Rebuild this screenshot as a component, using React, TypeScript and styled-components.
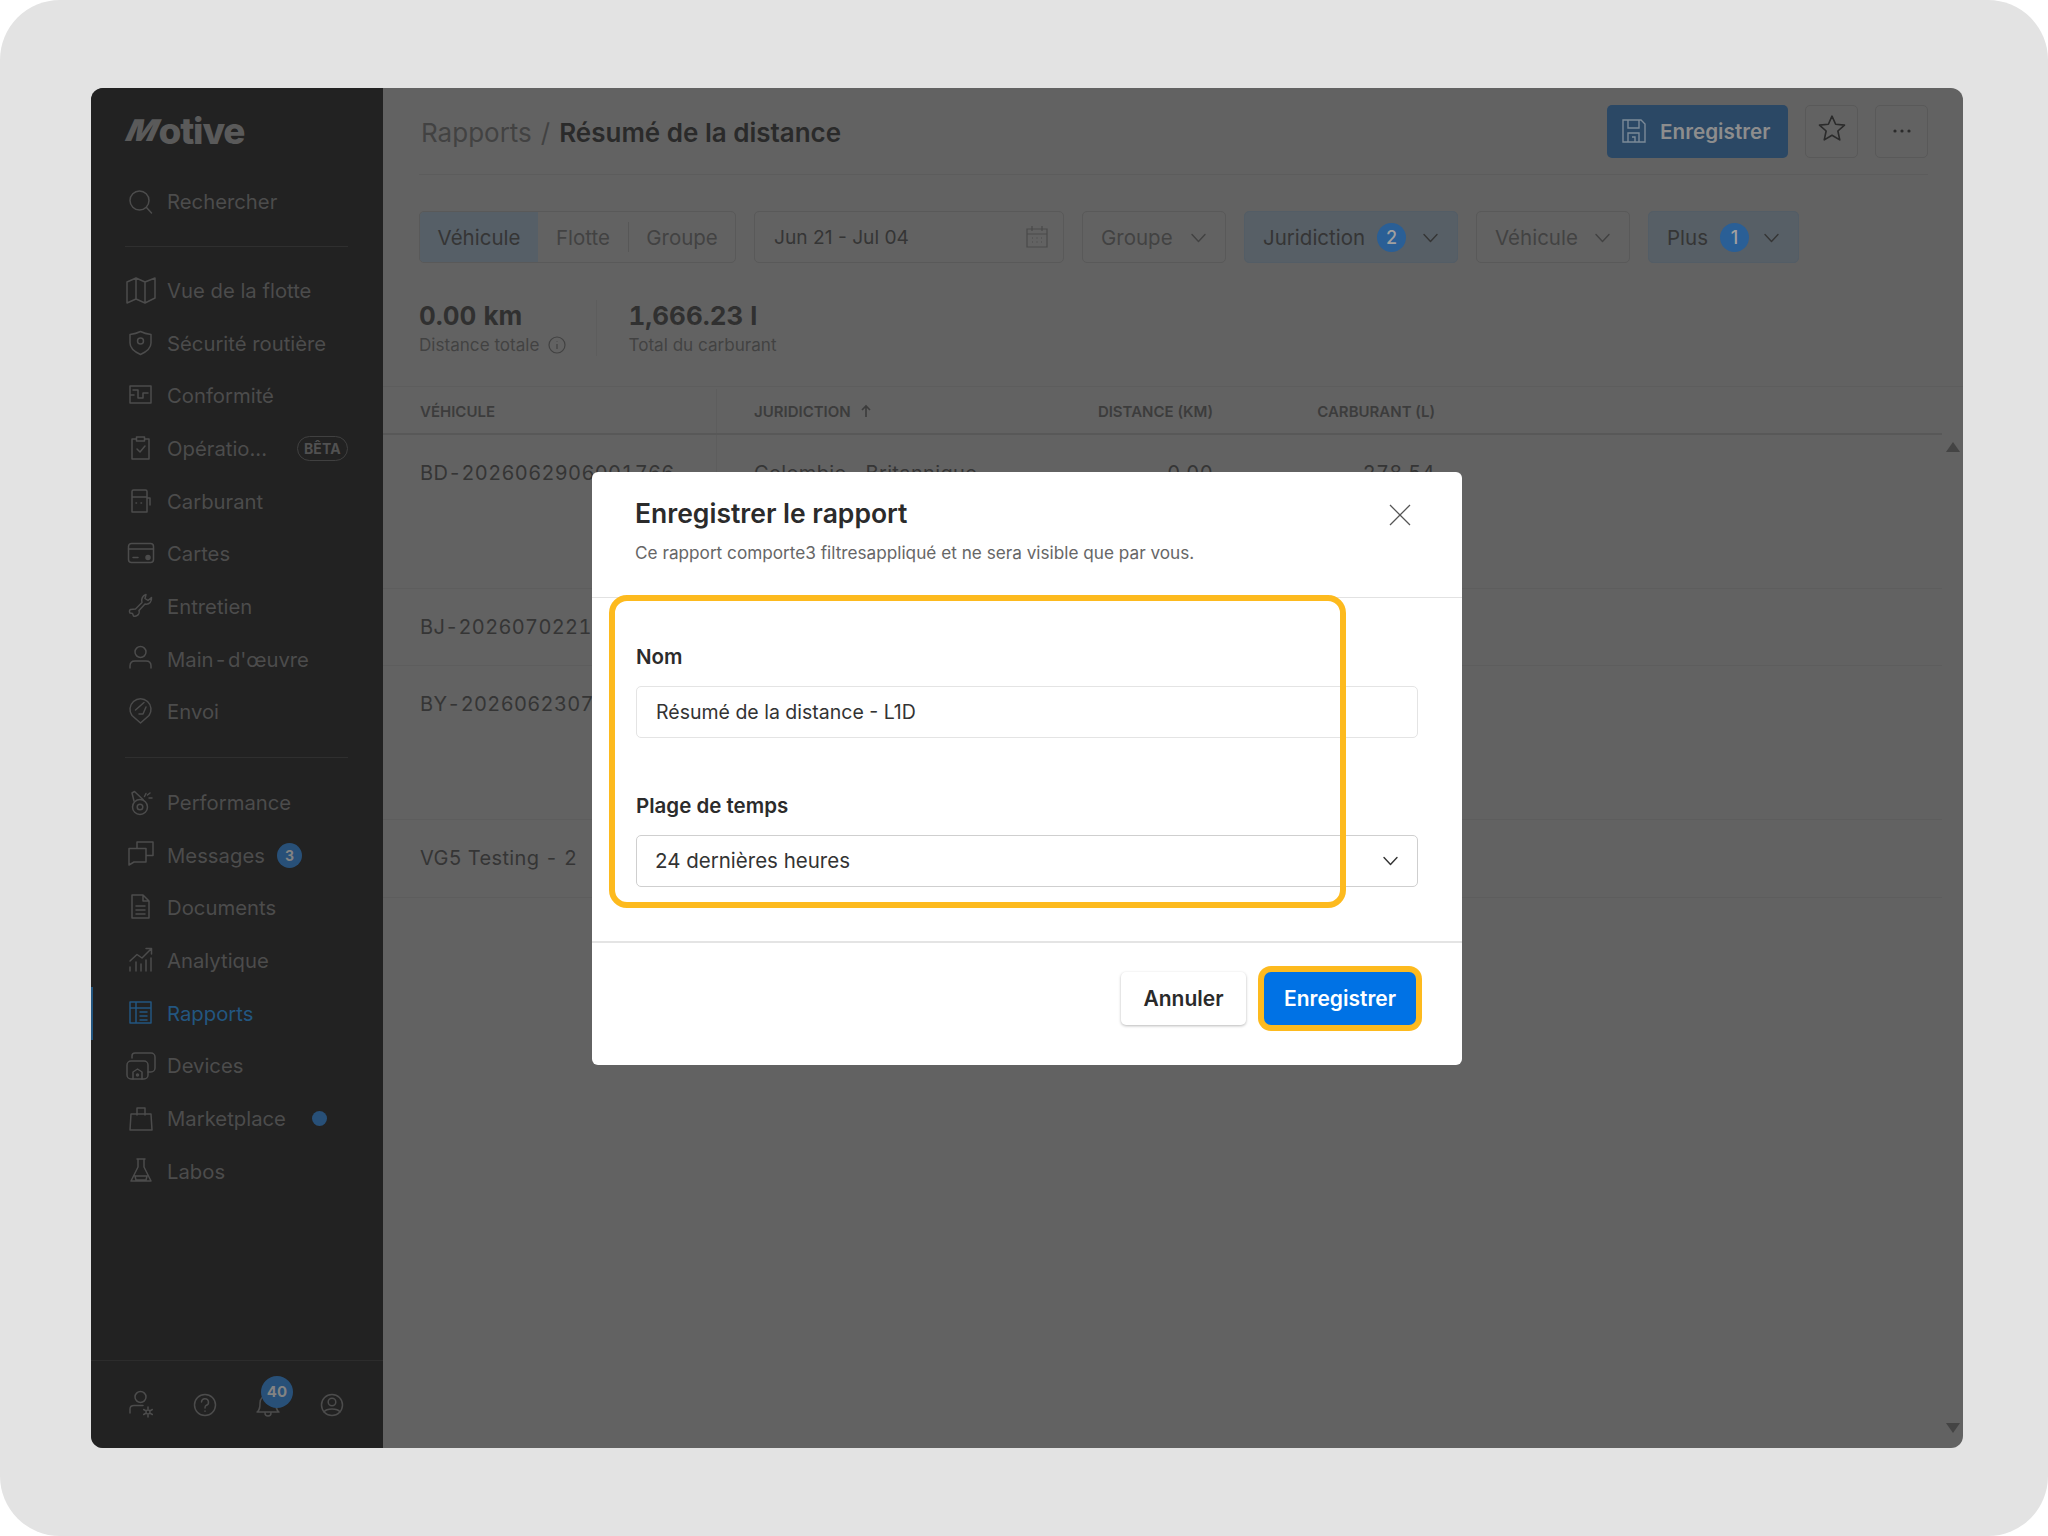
import React from "react";
import styled, { createGlobalStyle } from "styled-components";

const GlobalStyle = createGlobalStyle`
  html, body {
    margin: 0;
    padding: 0;
    background: #ffffff;
    font-family: "Inter", "Liberation Sans", sans-serif;
  }
  * {
    box-sizing: border-box;
  }
`;

const navText = "#4c4c4c";
const dimBorder = "#595959";
const dimText = "#353535";
const dimMuted = "#424242";
const blue = "#2a5f96";
const navyBlue = "#285078";
const yellow = "#fdba1e";

const Page = styled.div`
  width: 2048px;
  height: 1536px;
  padding: 88px 85px 88px 91px;
  background: #e3e3e3;
  border-radius: 60px;
`;

const Window = styled.div`
  position: relative;
  display: flex;
  height: 100%;
  background: #626262;
  border-radius: 12px;
  overflow: hidden;
`;

// Sidebar
const Sidebar = styled.aside`
  display: flex;
  flex-direction: column;
  width: 292px;
  flex: none;
  background: #222222;
  color: ${navText};
`;

const LogoRow = styled.div`
  display: flex;
  align-items: center;
  height: 84px;
  padding-left: 38px;
  font-size: 37px;
  font-weight: 800;
  letter-spacing: -1.2px;
  color: #5a5a5a;
`;

const LogoM = styled.span`
  display: inline-block;
  font-size: 30px;
  font-weight: 900;
  transform: skewX(-24deg) scaleX(1.06);
  margin-right: 2px;
`;

const SideDivider = styled.div<{ $top: number; $bottom: number }>`
  height: 1px;
  margin: ${(p) => p.$top}px 35px ${(p) => p.$bottom}px 34px;
  background: #2f2f2f;
`;

const NavRow = styled.div<{ $active?: boolean; $height?: number }>`
  position: relative;
  display: flex;
  align-items: center;
  height: ${(p) => p.$height ?? 52.7}px;
  padding: 0 35px;
  font-size: 20.3px;
  white-space: nowrap;
  color: ${(p) => (p.$active ? "#235680" : navText)};

  ${(p) =>
    p.$active &&
    `&::before {
      content: "";
      position: absolute;
      left: 0;
      top: 0;
      bottom: 0;
      width: 2px;
      background: #235680;
    }`}
`;

const NavHyphen = styled.span`
  margin: 0 2.5px;
`;

const NavIcon = styled.svg`
  width: 30px;
  height: 30px;
  flex: none;
  margin-right: 11px;
  fill: none;
  stroke: currentColor;
  stroke-width: 1.5;
  stroke-linejoin: round;
  stroke-linecap: round;
`;

const BetaPill = styled.span`
  margin-left: auto;
  padding: 0 6px;
  height: 25px;
  line-height: 23px;
  border: 1px solid #404040;
  border-radius: 13px;
  font-size: 14px;
  font-weight: 700;
  letter-spacing: 0.2px;
  color: #515151;
`;

const CountBadge = styled.span`
  display: flex;
  align-items: center;
  justify-content: center;
  width: 25px;
  height: 25px;
  margin-left: 12px;
  border-radius: 50%;
  background: ${navyBlue};
  color: #838383;
  font-size: 14px;
  font-weight: 700;
`;

const NewDot = styled.span`
  width: 15px;
  height: 15px;
  margin-left: 26px;
  border-radius: 50%;
  background: ${navyBlue};
`;

const SideSpacer = styled.div`
  flex: 1;
`;

const SideFooter = styled.div`
  display: flex;
  align-items: center;
  gap: 33.5px;
  height: 88px;
  padding-left: 35px;
  border-top: 1px solid #2c2c2c;
`;

const FooterIcon = styled.div`
  position: relative;
  display: flex;
  width: 30px;
  height: 30px;
  color: ${navText};
`;

const BellBadge = styled.span`
  position: absolute;
  left: 8px;
  top: -14px;
  display: flex;
  align-items: center;
  justify-content: center;
  width: 32px;
  height: 32px;
  border-radius: 50%;
  background: ${navyBlue};
  color: #838383;
  font-size: 15px;
  font-weight: 700;
`;

// Main column
const Main = styled.main`
  display: flex;
  flex-direction: column;
  flex: 1;
  min-width: 0;
`;

const Header = styled.header`
  display: flex;
  align-items: center;
  justify-content: space-between;
  height: 87px;
  margin: 0 35px 0 36px;
  padding: 0 0 0 2px;
  border-bottom: 1px solid #5c5c5c;
`;

const Crumbs = styled.div`
  display: flex;
  align-items: baseline;
  padding-top: 3px;
  font-size: 26px;
  color: ${dimMuted};
`;

const CrumbSep = styled.span`
  margin: 0 9px;
`;

const CrumbCurrent = styled.span`
  font-weight: 600;
  color: #2a2a2a;
`;

const HeaderActions = styled.div`
  display: flex;
  gap: 17px;
`;

const SaveButton = styled.div`
  display: flex;
  align-items: center;
  gap: 14px;
  width: 181px;
  height: 53px;
  padding-left: 15px;
  border-radius: 5px;
  background: #2b4865;
  color: #8d8d8d;
  font-size: 20.7px;
  font-weight: 600;
`;

const SquareButton = styled.div<{ $raised?: boolean }>`
  display: flex;
  align-items: center;
  justify-content: center;
  width: 53px;
  height: 53px;
  padding-bottom: ${(p) => (p.$raised ? 7 : 0)}px;
  border: 1px solid ${dimBorder};
  border-radius: 5px;
  color: #2b2b2b;
`;

const FilterBar = styled.div`
  display: flex;
  gap: 18px;
  height: 52px;
  margin: 36px 0 0 36px;
  font-size: 20.5px;
  color: ${dimText};
`;

const Segments = styled.div`
  display: flex;
  align-items: center;
  width: 317px;
  border: 1px solid ${dimBorder};
  border-radius: 5px;
  overflow: hidden;
`;

const Segment = styled.div<{ $active?: boolean; $width: number }>`
  display: flex;
  align-items: center;
  justify-content: center;
  align-self: stretch;
  width: ${(p) => p.$width}px;
  background: ${(p) => (p.$active ? "#565f67" : "transparent")};
  color: ${(p) => (p.$active ? dimText : dimMuted)};
`;

const SegmentRule = styled.div`
  width: 1px;
  height: 30px;
  background: #575757;
`;

const DateField = styled.div`
  display: flex;
  align-items: center;
  justify-content: space-between;
  width: 310px;
  padding: 0 15px 0 19px;
  border: 1px solid ${dimBorder};
  border-radius: 5px;
  font-size: 19.2px;
`;

const Filter = styled.div<{ $selected?: boolean; $width: number; $muted?: boolean }>`
  display: flex;
  align-items: center;
  width: ${(p) => p.$width}px;
  padding: 0 18px;
  border: 1px solid ${(p) => (p.$selected ? "#535d66" : dimBorder)};
  border-radius: 5px;
  background: ${(p) => (p.$selected ? "#575f66" : "transparent")};
  color: ${(p) => (p.$muted ? dimMuted : dimText)};
`;

const FilterCount = styled.span`
  display: flex;
  align-items: center;
  justify-content: center;
  width: 29px;
  height: 29px;
  margin-left: 12px;
  border-radius: 50%;
  background: ${blue};
  color: #a0a0a0;
  font-size: 18px;
  font-weight: 500;
`;

const Chevron = styled.svg`
  width: 17px;
  height: 17px;
  margin-left: auto;
  fill: none;
  stroke: currentColor;
  stroke-width: 1.4;
  stroke-linecap: round;
  stroke-linejoin: round;
`;

const Stats = styled.div`
  display: flex;
  height: 56px;
  margin: 37px 0 30px 36px;
`;

const Stat = styled.div<{ $rule?: boolean }>`
  display: flex;
  flex-direction: column;
  gap: 2px;
  padding-right: 30px;
  margin-right: 31px;
  border-right: 1px solid ${(p) => (p.$rule ? "#5d5d5d" : "transparent")};
`;

const StatValue = styled.div`
  font-size: 26px;
  line-height: 32px;
  font-weight: 700;
  font-variant-numeric: tabular-nums;
  color: #303030;
`;

const StatLabel = styled.div`
  display: flex;
  align-items: center;
  gap: 9px;
  font-size: 17.1px;
  line-height: 22px;
  color: ${dimMuted};
`;

const Table = styled.div`
  display: flex;
  flex-direction: column;
  flex: 1;
  min-height: 0;
  border-top: 1px solid #5d5d5d;
`;

const tableColumns = "334px 320px 193px 222px 1fr";

const HeadRow = styled.div`
  display: grid;
  grid-template-columns: ${tableColumns};
  height: 48px;
  margin-right: 21px;
  padding-top: 2px;
  border-bottom: 2px solid #585858;
  font-size: 15px;
  font-weight: 600;
  color: #3c3c3c;
`;

const HeadCell = styled.div<{ $right?: boolean; $rule?: boolean }>`
  display: flex;
  align-items: center;
  gap: 9px;
  justify-content: ${(p) => (p.$right ? "flex-end" : "flex-start")};
  padding: 0 16px 0 ${(p) => (p.$right ? 0 : 37)}px;
  border-right: 1px solid ${(p) => (p.$rule ? "#5d5d5d" : "transparent")};
`;

const BodyWrap = styled.div`
  display: flex;
  flex: 1;
  min-height: 0;
`;

const Rows = styled.div`
  flex: 1;
`;

const Row = styled.div<{ $height: number }>`
  display: grid;
  grid-template-columns: ${tableColumns};
  height: ${(p) => p.$height}px;
  border-bottom: 1px solid #5d5d5d;
  font-size: 20px;
  line-height: 26px;
  letter-spacing: 0.35px;
  font-variant-numeric: tabular-nums;
  color: ${dimText};
`;

const Cell = styled.div<{ $right?: boolean; $rule?: boolean }>`
  padding: 25px 16px 0 ${(p) => (p.$right ? 0 : 37)}px;
  text-align: ${(p) => (p.$right ? "right" : "left")};
  white-space: nowrap;
  overflow: hidden;
  border-right: 1px solid ${(p) => (p.$rule ? "#5d5d5d" : "transparent")};
`;

const Scrollbar = styled.div`
  display: flex;
  flex-direction: column;
  justify-content: space-between;
  align-items: center;
  width: 21px;
  padding: 7px 0 15px;
`;

const ScrollArrow = styled.div<{ $down?: boolean }>`
  width: 0;
  height: 0;
  border-left: 7px solid transparent;
  border-right: 7px solid transparent;
  ${(p) => (p.$down ? "border-top: 10px solid #444444;" : "border-bottom: 10px solid #444444;")}
`;

// Dialog
const ModalLayer = styled.div`
  position: absolute;
  inset: 0;
  display: flex;
  align-items: center;
  justify-content: center;
`;

const Modal = styled.div`
  position: relative;
  width: 870px;
  height: 593px;
  background: #ffffff;
  border-radius: 6px;
  color: #2b2b2b;
`;

const ModalHeader = styled.div`
  position: relative;
  height: 126px;
  padding: 25px 44px 0;
  border-bottom: 1px solid #e2e2e2;
`;

const ModalTitle = styled.div`
  margin-left: -1px;
  font-size: 26.5px;
  line-height: 32px;
  font-weight: 600;
`;

const ModalSub = styled.div`
  margin: 12px 0 0 -1px;
  font-size: 17.2px;
  line-height: 24px;
  color: #666666;
`;

const CloseIcon = styled.svg`
  position: absolute;
  right: 50px;
  top: 31px;
  width: 24px;
  height: 24px;
  fill: none;
  stroke: #555555;
  stroke-width: 1.3;
`;

const ModalBody = styled.div`
  height: 345px;
  padding: 47px 44px 0;
  border-bottom: 2px solid #e4e4e4;
`;

const FieldLabel = styled.div`
  font-size: 20.5px;
  line-height: 24px;
  font-weight: 600;
  margin-bottom: 17px;
`;

const FieldBox = styled.div<{ $select?: boolean }>`
  display: flex;
  align-items: center;
  justify-content: space-between;
  height: 52px;
  padding: 0 18px 0 ${(p) => (p.$select ? 18 : 19)}px;
  margin-bottom: ${(p) => (p.$select ? 0 : 56)}px;
  border: 1.5px solid ${(p) => (p.$select ? "#cfcfcf" : "#e4e4e4")};
  border-radius: 5px;
  font-size: ${(p) => (p.$select ? 20.5 : 19.5)}px;
  color: #333333;
`;

const ModalFooter = styled.div`
  display: flex;
  justify-content: flex-end;
  gap: 18px;
  padding: 29px 46px 0 0;
`;

const CancelButton = styled.div`
  display: flex;
  align-items: center;
  justify-content: center;
  width: 125px;
  height: 53px;
  border-radius: 5px;
  background: #ffffff;
  box-shadow: 0 1px 3px rgba(0, 0, 0, 0.28);
  font-size: 21px;
  font-weight: 600;
  color: #2a2a2a;
`;

const PrimaryButton = styled.div`
  display: flex;
  align-items: center;
  justify-content: center;
  width: 152px;
  height: 53px;
  border-radius: 7px;
  background: #0072e5;
  box-shadow: 0 0 0 6px ${yellow};
  font-size: 21px;
  font-weight: 600;
  color: #ffffff;
`;

const FieldHighlight = styled.div`
  position: absolute;
  left: 17px;
  top: 123px;
  width: 737px;
  height: 313px;
  border: 6px solid ${yellow};
  border-radius: 18px;
  pointer-events: none;
`;

const icons: Record<string, React.ReactNode> = {
  search: (
    <>
      <circle cx="13.5" cy="13.5" r="9.5" />
      <path d="M20.5 20.5L25.5 26" />
    </>
  ),
  map: <path d="M1 7L10 3L19 7L29 3V23L19 28L10 24L1 28ZM10 3V24M19 7V28" />,
  shield: (
    <>
      <path d="M4 6.5C8 6 11.5 5 14.5 3.5C17.5 5 21 6 25 6.5V15C25 20 20 24 14.5 26.5C9 24 4 20 4 15Z" />
      <circle cx="14.5" cy="13" r="3" />
    </>
  ),
  compliance: <path d="M4 5H25V22H4ZM7 9H12V17H17V12H22M4 14H8" />,
  clipboard: <path d="M10 6H6V26H23V6H19M10.5 4H18.5V8H10.5ZM11 16L14 19L19 13" />,
  fuel: <path d="M6 26V5.5A1.5 1.5 0 0 1 7.5 4H19.5A1.5 1.5 0 0 1 21 5.5V26ZM6 11H21M21 12H24V19M10 17H10.5M15 17H15.5" />,
  card: (
    <>
      <rect x="2.5" y="4.5" width="25" height="19" rx="3" />
      <path d="M2.5 10H27.5M7 18.5H12" />
      <circle cx="22" cy="18.5" r="2" fill="currentColor" />
    </>
  ),
  wrench: <path d="M4.5 18.5L9.5 18L16 11.5C15 8 16.5 4.5 20 3.5L19 7.5L22 9.5L25.5 6.5C26 10 23.5 14 19 13L13 19.5C13.5 21 13 23.5 11 24.5C9.5 25 8.5 26 7.5 25L6.5 22.5L4 22C3 20.5 3.5 19 4.5 18.5Z" />,
  user: (
    <>
      <circle cx="14.5" cy="8" r="5.5" />
      <path d="M4 24V22C4 19 6 17 9 17H20C23 17 25 19 25 22V24" />
    </>
  ),
  dispatch: <path d="M14.5 26L6 18.5A10.5 10.5 0 1 1 23 18.5ZM9.5 13L18 5.5M13 17H17L20 10" />,
  performance: (
    <>
      <circle cx="14" cy="19" r="7.5" />
      <circle cx="14" cy="19" r="2.8" />
      <path d="M8 13L6 5L8.5 3.5L17 11.5M20 5.5L18.5 8.5M26 10H23M24 5L21.5 7" />
    </>
  ),
  messages: <path d="M11 8V2H27V15.5H20M3 8.5H20V22H8L3 25Z" />,
  documents: <path d="M6 2H17L23 8V25H6ZM17 2V8H23M10 13H19M10 17H19M10 21H19" />,
  analytics: <path d="M4 15L11 8.5L16 12L25 3M20 2.5H25.5V8M4 25V21M10 25V16M15 25V18M20 25V14M25 25V12" />,
  reports: <path d="M4 4H25V25H4ZM4 10H25M10 4V25M14 14H21M14 18H21M14 22H21" />,
  devices: (
    <>
      <path d="M6 7V5A3 3 0 0 1 9 2H25A4 4 0 0 1 29 6V17A4 4 0 0 1 25 21H22" />
      <rect x="1" y="10" width="21" height="18" rx="4" />
      <path d="M7 28V21L11.5 18L16 21V28" />
      <circle cx="11.5" cy="24" r="1" fill="currentColor" />
    </>
  ),
  bag: <path d="M5 10H25L26 26H4ZM11 11V4H19V11" />,
  flask: <path d="M11 3H19M12 3V11L5 25H25L18 11V3M9 20H21L20 24H10Z" />,
  userCog: (
    <>
      <circle cx="14.5" cy="7" r="5.5" />
      <path d="M4 23V19C4 17 5.5 15.5 8 15.5H17" />
      <circle cx="22" cy="22" r="2" />
      <path d="M22 17V19M22 25V27M17.7 19.5L19.4 20.5M24.6 23.5L26.3 24.5M17.7 24.5L19.4 23.5M24.6 20.5L26.3 19.5" />
    </>
  ),
  help: (
    <>
      <circle cx="15" cy="15" r="10.5" />
      <path d="M11.5 12A3.5 3.5 0 1 1 16 15.5C15 16 15 17 15 18M15 21V21.2" />
    </>
  ),
  bell: <path d="M4 22C7 20 7 17 7 13A8 8 0 0 1 23 13C23 17 23 20 26 22ZM12 23A3 3 0 0 0 18 23" />,
  account: (
    <>
      <circle cx="15" cy="15" r="10.5" />
      <circle cx="15" cy="12" r="3.8" />
      <path d="M7 22C9 19 12 19 15 19C18 19 21 19 23 22" />
    </>
  ),
};

const Icon = ({ name }: { name: string }) => <NavIcon viewBox="0 0 30 30">{icons[name]}</NavIcon>;

const ChevronDown = () => (
  <Chevron viewBox="0 0 17 17">
    <path d="M2 5.5L8.5 12.5L15 5.5" />
  </Chevron>
);

const topNav = [
  { icon: "map", label: "Vue de la flotte" },
  { icon: "shield", label: "Sécurité routière" },
  { icon: "compliance", label: "Conformité" },
  { icon: "clipboard", label: "Opératio...", beta: true },
  { icon: "fuel", label: "Carburant" },
  { icon: "card", label: "Cartes" },
  { icon: "wrench", label: "Entretien" },
  {
    icon: "user",
    label: (
      <>
        Main<NavHyphen>-</NavHyphen>d'œuvre
      </>
    ),
  },
  { icon: "dispatch", label: "Envoi" },
];

const bottomNav = [
  { icon: "performance", label: "Performance" },
  { icon: "messages", label: "Messages", count: 3 },
  { icon: "documents", label: "Documents" },
  { icon: "analytics", label: "Analytique" },
  { icon: "reports", label: "Rapports", active: true },
  { icon: "devices", label: "Devices" },
  { icon: "bag", label: "Marketplace", dot: true },
  { icon: "flask", label: "Labos" },
];

const rows = [
  { id: "BD-20260629060​01766", place: "Colombie- Britannique", km: "0.00", fuel: "278.54", height: 154 },
  { id: "BJ-2026070221​001544", place: "Colombie- Britannique", km: "0.00", fuel: "412.10", height: 77 },
  { id: "BY-2026062307​001289", place: "Colombie- Britannique", km: "0.00", fuel: "611.37", height: 154 },
  { id: "VG5 Testing - 2", place: "Colombie- Britannique", km: "0.00", fuel: "364.22", height: 78 },
];

const App: React.FC = () => {
  return (
    <Page>
      <GlobalStyle />
      <Window>
        <Sidebar>
          <LogoRow>
            <LogoM>M</LogoM>otive
          </LogoRow>
          <NavRow $height={59}>
            <Icon name="search" />
            Rechercher
          </NavRow>
          <SideDivider $top={15} $bottom={17} />
          {topNav.map((item) => (
            <NavRow key={item.icon}>
              <Icon name={item.icon} />
              {item.label}
              {item.beta && <BetaPill>BÊTA</BetaPill>}
            </NavRow>
          ))}
          <SideDivider $top={19} $bottom={18} />
          {bottomNav.map((item) => (
            <NavRow key={item.label} $active={item.active}>
              <Icon name={item.icon} />
              {item.label}
              {item.count && <CountBadge>{item.count}</CountBadge>}
              {item.dot && <NewDot />}
            </NavRow>
          ))}
          <SideSpacer />
          <SideFooter>
            <FooterIcon>
              <Icon name="userCog" />
            </FooterIcon>
            <FooterIcon>
              <Icon name="help" />
            </FooterIcon>
            <FooterIcon>
              <Icon name="bell" />
              <BellBadge>40</BellBadge>
            </FooterIcon>
            <FooterIcon>
              <Icon name="account" />
            </FooterIcon>
          </SideFooter>
        </Sidebar>

        <Main>
          <Header>
            <Crumbs>
              Rapports
              <CrumbSep>/</CrumbSep>
              <CrumbCurrent>Résumé de la distance</CrumbCurrent>
            </Crumbs>
            <HeaderActions>
              <SaveButton>
                <svg width="24" height="26" viewBox="0 0 24 26" fill="none" stroke="#7c8a98" strokeWidth="1.4">
                  <path d="M1 2H19L23 6V24H1ZM6 2V10H17V2M6 24V15H17V24M10 19H13V24" />
                </svg>
                Enregistrer
              </SaveButton>
              <SquareButton $raised>
                <svg width="30" height="30" viewBox="0 0 24 24" fill="none" stroke="currentColor" strokeWidth="1.3" strokeLinejoin="round">
                  <path d="M12 2.5L14.9 9L22 9.7L16.7 14.4L18.2 21.5L12 17.8L5.8 21.5L7.3 14.4L2 9.7L9.1 9Z" />
                </svg>
              </SquareButton>
              <SquareButton>
                <svg width="20" height="6" viewBox="0 0 20 6" fill="currentColor">
                  <circle cx="3" cy="3" r="1.6" />
                  <circle cx="10" cy="3" r="1.6" />
                  <circle cx="17" cy="3" r="1.6" />
                </svg>
              </SquareButton>
            </HeaderActions>
          </Header>

          <FilterBar>
            <Segments>
              <Segment $active $width={118}>Véhicule</Segment>
              <Segment $width={90}>Flotte</Segment>
              <SegmentRule />
              <Segment $width={106}>Groupe</Segment>
            </Segments>
            <DateField>
              Jun 21 - Jul 04
              <svg width="22" height="24" viewBox="0 0 22 24" fill="none" stroke="#4a4a4a" strokeWidth="1.2">
                <path d="M1 4H21V22H1ZM1 9H21M6 1V6M16 1V6M6 13H7M10.5 13H11.5M15 13H16M6 17H7M10.5 17H11.5M15 17H16" />
              </svg>
            </DateField>
            <Filter $width={144} $muted>
              Groupe
              <ChevronDown />
            </Filter>
            <Filter $width={214} $selected>
              Juridiction
              <FilterCount>2</FilterCount>
              <ChevronDown />
            </Filter>
            <Filter $width={154} $muted>
              Véhicule
              <ChevronDown />
            </Filter>
            <Filter $width={151} $selected>
              Plus
              <FilterCount>1</FilterCount>
              <ChevronDown />
            </Filter>
          </FilterBar>

          <Stats>
            <Stat $rule>
              <StatValue>0.00 km</StatValue>
              <StatLabel>
                Distance totale
                <svg width="18" height="18" viewBox="0 0 18 18" fill="none" stroke="currentColor" strokeWidth="1.2">
                  <circle cx="9" cy="9" r="8" />
                  <path d="M9 8V13M9 5V5.6" />
                </svg>
              </StatLabel>
            </Stat>
            <Stat>
              <StatValue>1,666.23 l</StatValue>
              <StatLabel>Total du carburant</StatLabel>
            </Stat>
          </Stats>

          <Table>
            <HeadRow>
              <HeadCell $rule>VÉHICULE</HeadCell>
              <HeadCell>
                JURIDICTION
                <svg width="12" height="14" viewBox="0 0 12 14" fill="none" stroke="currentColor" strokeWidth="1.6">
                  <path d="M6 13V2M2 6L6 2L10 6" />
                </svg>
              </HeadCell>
              <HeadCell $right>DISTANCE (KM)</HeadCell>
              <HeadCell $right>CARBURANT (L)</HeadCell>
              <HeadCell />
            </HeadRow>
            <BodyWrap>
              <Rows>
                {rows.map((row) => (
                  <Row key={row.id} $height={row.height}>
                    <Cell $rule>{row.id}</Cell>
                    <Cell>{row.place}</Cell>
                    <Cell $right>{row.km}</Cell>
                    <Cell $right>{row.fuel}</Cell>
                    <Cell />
                  </Row>
                ))}
              </Rows>
              <Scrollbar>
                <ScrollArrow />
                <ScrollArrow $down />
              </Scrollbar>
            </BodyWrap>
          </Table>
        </Main>

        <ModalLayer>
          <Modal>
            <ModalHeader>
              <ModalTitle>Enregistrer le rapport</ModalTitle>
              <ModalSub>Ce rapport comporte3 filtresappliqué et ne sera visible que par vous.</ModalSub>
              <CloseIcon viewBox="0 0 24 24">
                <path d="M2 2L22 22M22 2L2 22" />
              </CloseIcon>
            </ModalHeader>
            <ModalBody>
              <FieldLabel>Nom</FieldLabel>
              <FieldBox>Résumé de la distance - L1D</FieldBox>
              <FieldLabel>Plage de temps</FieldLabel>
              <FieldBox $select>
                24 dernières heures
                <Chevron viewBox="0 0 17 17">
                  <path d="M2 5.5L8.5 12.5L15 5.5" />
                </Chevron>
              </FieldBox>
            </ModalBody>
            <ModalFooter>
              <CancelButton>Annuler</CancelButton>
              <PrimaryButton>Enregistrer</PrimaryButton>
            </ModalFooter>
            <FieldHighlight />
          </Modal>
        </ModalLayer>
      </Window>
    </Page>
  );
};

export default App;
